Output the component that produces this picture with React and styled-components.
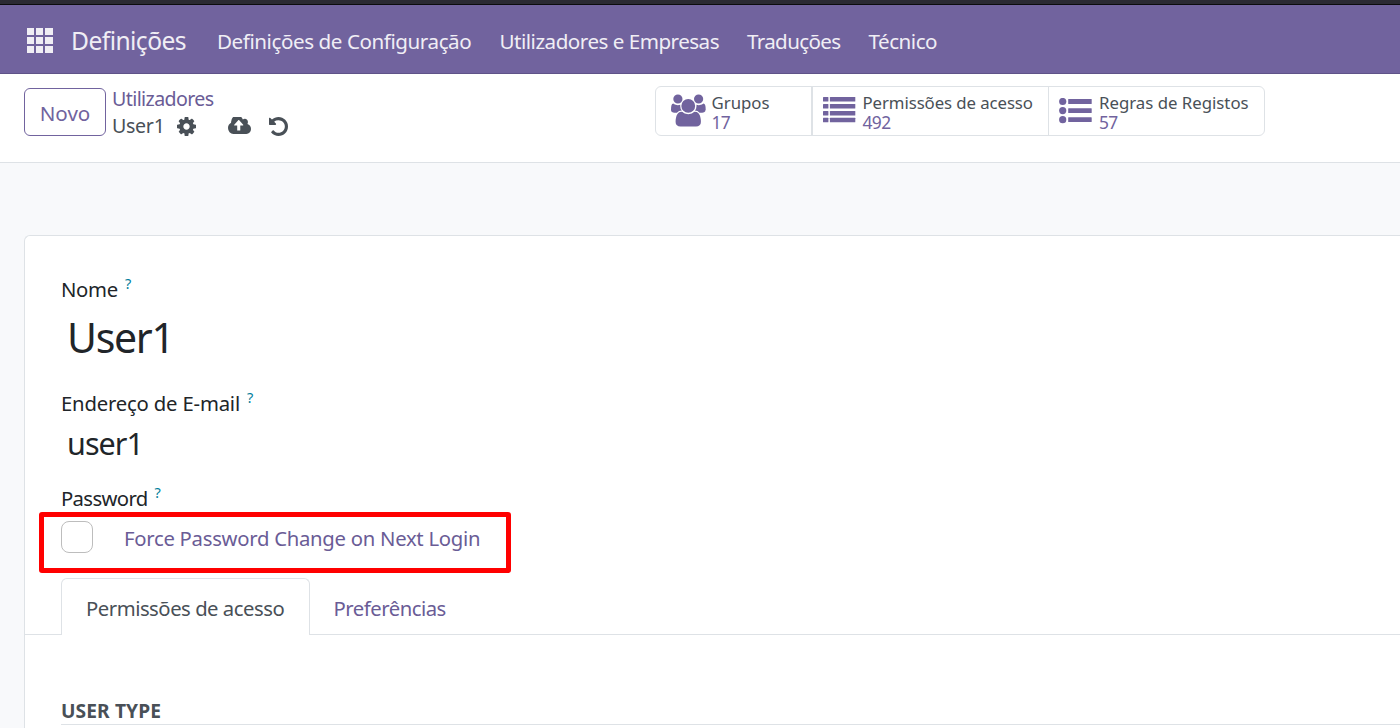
import React from "react";
import styled, { createGlobalStyle } from "styled-components";

const Global = createGlobalStyle`
  * { box-sizing: border-box; }
  html, body { margin: 0; height: 100%; overflow: hidden; }
  body {
    background: #f8f9fa;
    font-family: "Segoe UI", "Noto Sans", "Open Sans", sans-serif;
    font-size: 20.3px;
    color: #212529;
  }
  svg { display: block; fill: currentColor; flex: none; }
`;

const Page = styled.div`
  display: flex;
  flex-direction: column;
  width: 1400px;
  height: 728px;
  overflow: hidden;
  background: #f8f9fb;
`;

const BrowserEdge = styled.div`
  height: 5px;
  flex: none;
  background: #2b2a33;
  border-bottom: 1px solid #0c0c0d;
`;

const Navbar = styled.nav`
  display: flex;
  align-items: center;
  height: 69px;
  flex: none;
  padding: 3px 0 0 27px;
  background: #71639e;
  border-bottom: 1px solid #5f5388;
  color: #f0eef5;
  white-space: nowrap;
  font-size: 20.6px;
`;

const AppsGrid = styled.div`
  display: grid;
  grid-template-columns: 7px 7px 8px;
  grid-auto-rows: 7px;
  gap: 2px;
  margin-right: 18px;
  i { background: #f0eef5; }
`;

const Brand = styled.span`
  width: 146px;
  font-size: 24.6px;
  letter-spacing: -0.55px;
`;

const NavItem = styled.span`
  width: ${(p) => p.$width}px;
  letter-spacing: ${(p) => p.$track}px;
`;

const ControlPanel = styled.header`
  display: flex;
  align-items: flex-start;
  height: 89px;
  flex: none;
  padding: 12px 0 0 24px;
  background: #fff;
  border-bottom: 1px solid #dee2e6;
  white-space: nowrap;
`;

const NewButton = styled.button`
  width: 82px;
  height: 48px;
  margin: 2px 6px 0 0;
  padding: 2px 0 0;
  border: 1px solid #71639e;
  border-radius: 6px;
  background: #fff;
  color: #71639e;
  font: inherit;
  font-size: 20.6px;
`;

const Breadcrumb = styled.div`
  width: 543px;
  margin-top: -1px;
  font-size: 19.6px;
  line-height: 27px;
`;

const Crumb = styled.div`
  color: #6a5c96;
  letter-spacing: -0.6px;
`;

const Current = styled.div`
  display: flex;
  align-items: center;
  color: #495057;
  letter-spacing: -0.3px;
  span { width: 65px; }
`;

const Gear = styled.svg` width: 19px; height: 19px; margin: 1px 32px 0 0; `;
const Cloud = styled.svg` width: 23px; height: 17px; margin-right: 18px; `;
const Undo = styled.svg` width: 19px; height: 19px; margin-top: 1px; `;

const StatBar = styled.div`
  display: flex;
  width: 610px;
  height: 50px;
  border: 1px solid #dee2e6;
  border-radius: 6px;
  font-size: 16.8px;
`;

const Stat = styled.div`
  display: flex;
  align-items: flex-start;
  width: ${(p) => p.$width}px;
  padding-left: ${(p) => p.$left}px;
  border-right: ${(p) => p.$divider || 0}px solid #dee2e6;
  color: #71639e;
`;

const StatIcon = styled.svg`
  margin: ${(p) => p.$top}px ${(p) => p.$gap}px 0 0;
`;

const StatText = styled.div`
  padding-top: 6px;
  line-height: 20px;
`;

const StatLabel = styled.div`
  color: #495057;
  letter-spacing: ${(p) => p.$track || 0}px;
`;

const StatValue = styled.div`
  font-size: 17.4px;
  line-height: 18px;
  letter-spacing: -0.6px;
`;

const Sheet = styled.main`
  flex: 1;
  min-height: 0;
  margin: 72px 0 0 24px;
  padding-top: 38px;
  background: #fff;
  border: 1px solid #dee2e6;
  border-width: 1px 0 0 1px;
  border-top-left-radius: 6px;
  white-space: nowrap;
`;

const Label = styled.div`
  display: flex;
  height: ${(p) => p.$height || 30}px;
  padding-left: 36px;
  line-height: 30px;
  letter-spacing: ${(p) => p.$track || 0}px;
`;

const Help = styled.sup`
  margin-left: 7px;
  font-size: 14.5px;
  line-height: 18px;
  letter-spacing: 0;
  color: #017e9b;
`;

const Value = styled.div`
  height: ${(p) => p.$height}px;
  padding-left: 42px;
  font-size: ${(p) => p.$size}px;
  line-height: ${(p) => p.$line}px;
  letter-spacing: ${(p) => p.$track || 0}px;
`;

const Highlight = styled.div`
  display: flex;
  width: 472px;
  height: 61px;
  margin: 0 0 5px 14px;
  padding: 4px 0 0 17px;
  border: 5px solid #f00;
  border-radius: 3px;
`;

const Checkbox = styled.span`
  width: 32px;
  height: 32px;
  margin-right: 31px;
  border: 1px solid #bdbdbd;
  border-radius: 8px;
`;

const ForceLink = styled.span`
  color: #6a5c96;
  line-height: 35px;
  letter-spacing: -0.27px;
`;

const Tabs = styled.div`
  display: flex;
  height: 57px;
  padding-left: 36px;
  background: linear-gradient(#dee2e6, #dee2e6) bottom / 100% 1px no-repeat;
`;

const Tab = styled.div`
  width: ${(p) => (p.$active ? 249 : 160)}px;
  height: 57px;
  padding-left: ${(p) => (p.$active ? 24 : 23.5)}px;
  line-height: ${(p) => (p.$active ? 59 : 61)}px;
  border: ${(p) => (p.$active ? "1px solid #dee2e6" : "0")};
  border-bottom: 0;
  border-radius: 6px 6px 0 0;
  background: ${(p) => (p.$active ? "#fff" : "transparent")};
  color: ${(p) => (p.$active ? "#495057" : "#6a5c96")};
  letter-spacing: -0.48px;
`;

const Section = styled.h2`
  height: 30px;
  margin: 60px 0 0 36px;
  border-bottom: 1px solid #dee2e6;
  color: #495057;
  font-size: 19.2px;
  font-weight: 700;
  line-height: 31px;
  letter-spacing: 0.1px;
`;

const USERS =
  "M593 896q-162 5-265 128h-134q-82 0-138-40.5t-56-118.5q0-353 124-353 6 0 43.5 21t97.5 42.5 119 21.5q67 0 133-23-5 37-5 66 0 159 93 256zm1071 637q0 120-73 189.5t-194 69.5h-874q-121 0-194-69.5t-73-189.5q0-53 3.5-103.5t14-109 26.5-108.5 43-97.5 62-81 85.5-53.5 111.5-20q10 0 43 21.5t73 48 107 48 135 21.5 135-21.5 107-48 73-48 43-21.5q61 0 111.5 20t85.5 53.5 62 81 43 97.5 26.5 108.5 14 109 3.5 103.5zm-1024-1277q0 106-75 181t-181 75-181-75-75-181 75-181 181-75 181 75 75 181zm704 384q0 159-112.5 271.5t-271.5 112.5-271.5-112.5-112.5-271.5 112.5-271.5 271.5-112.5 271.5 112.5 112.5 271.5zm576 225q0 78-56 118.5t-138 40.5h-134q-103-123-265-128 93-97 93-256 0-29-5-66 66 23 133 23 59 0 119-21.5t97.5-42.5 43.5-21q124 0 124 353zm-128-609q0 106-75 181t-181 75-181-75-75-181 75-181 181-75 181 75 75 181z";
const COG =
  "M1152 896q0-106-75-181t-181-75-181 75-75 181 75 181 181 75 181-75 75-181zm512-109v222q0 12-8 23t-20 13l-185 28q-19 54-39 91 35 50 107 138 10 12 10 25t-9 23q-27 37-99 108t-94 71q-12 0-26-9l-138-108q-44 23-91 38-16 136-29 186-7 28-36 28h-222q-14 0-24.5-8.5t-11.5-21.5l-28-184q-49-16-90-37l-141 107q-10 9-25 9-14 0-25-11-126-114-165-168-7-10-7-23 0-12 8-23 15-21 51-66.5t54-70.5q-27-50-41-99l-183-27q-13-2-21-12.5t-8-23.5v-222q0-12 8-23t19-13l186-28q14-46 39-92-40-57-107-138-10-12-10-24 0-10 9-23 26-36 98.5-107.5t94.5-71.5q13 0 26 10l138 107q44-23 91-38 16-136 29-186 7-28 36-28h222q14 0 24.5 8.5t11.5 21.5l28 184q49 16 90 37l142-107q9-9 24-9 13 0 25 10 129 119 165 170 7 8 7 22 0 12-8 23-15 21-51 66.5t-54 70.5q26 50 41 98l183 28q13 2 21 12.5t8 23.5z";
const UNDO =
  "M1664 896q0 156-61 298t-164 245-245 164-298 61q-172 0-327-72.5t-264-204.5q-7-10-6.5-22.5t8.5-20.5l137-138q10-9 25-9 16 2 23 12 73 95 179 147t225 52q104 0 198.5-40.5t163.5-109.5 109.5-163.5 40.5-198.5-40.5-198.5-109.5-163.5-163.5-109.5-198.5-40.5q-98 0-188 35.5t-160 101.5l137 138q31 30 14 69-17 40-59 40h-448q-26 0-45-19t-19-45v-448q0-42 40-59 39-17 69 14l130 129q107-101 244.5-156.5t284.5-55.5q156 0 298 61t245 164 164 245 61 298z";
const CLOUD =
  "M1216 864q0-14-9-23l-352-352q-9-9-23-9t-23 9l-351 351q-10 12-10 24 0 14 9 23t23 9h224v352q0 13 9.5 22.5t22.5 9.5h192q13 0 22.5-9.5t9.5-22.5v-352h224q13 0 22.5-9.5t9.5-22.5zm640 288q0 159-112.5 271.5t-271.5 112.5h-1088q-185 0-316.5-131.5t-131.5-316.5q0-130 70-240t188-165q-2-30-2-43 0-212 150-362t362-150q156 0 285.5 87t188.5 231q71-62 166-62 106 0 181 75t75 181q0 76-41 138 130 31 213.5 135.5t83.5 238.5z";

const rows4 = [0, 7, 14, 20.7];
const rows3 = [3.5, 12.6, 21.7];

export default function App() {
  return (
    <Page>
      <Global />
      <BrowserEdge />
      <Navbar>
        <AppsGrid>
          {Array.from({ length: 9 }, (_, i) => <i key={i} />)}
        </AppsGrid>
        <Brand>Definições</Brand>
        <NavItem $width={282.5} $track={-0.43}>Definições de Configuração</NavItem>
        <NavItem $width={247.5} $track={-0.5}>Utilizadores e Empresas</NavItem>
        <NavItem $width={121.5} $track={-0.65}>Traduções</NavItem>
        <NavItem $width={90} $track={-0.47}>Técnico</NavItem>
      </Navbar>
      <ControlPanel>
        <NewButton>Novo</NewButton>
        <Breadcrumb>
          <Crumb>Utilizadores</Crumb>
          <Current>
            <span>User1</span>
            <Gear viewBox="128 128 1536 1536"><path d={COG} /></Gear>
            <Cloud viewBox="-64 256 1920 1280" preserveAspectRatio="none"><path d={CLOUD} /></Cloud>
            <Undo viewBox="128 128 1536 1536"><path d={UNDO} /></Undo>
          </Current>
        </Breadcrumb>
        <StatBar>
          <Stat $width={157} $left={15} $divider={2}>
            <StatIcon $top={7} $gap={6} width="34.5" height="33" viewBox="0 0 1920 1792"><path d={USERS} /></StatIcon>
            <StatText>
              <StatLabel>Grupos</StatLabel>
              <StatValue>17</StatValue>
            </StatText>
          </Stat>
          <Stat $width={236} $left={10} $divider={1}>
            <StatIcon $top={10} $gap={6.5} width="33" height="26" viewBox="0 0 33 26">
              {rows4.map((y) => (
                <g key={y}>
                  <rect x="0" y={y} width="5.4" height="4.5" rx="0.5" />
                  <rect x="6.9" y={y} width="25.4" height="4.5" rx="0.5" />
                </g>
              ))}
            </StatIcon>
            <StatText>
              <StatLabel $track={-0.08}>Permissões de acesso</StatLabel>
              <StatValue>492</StatValue>
            </StatText>
          </Stat>
          <Stat $width={215} $left={10}>
            <StatIcon $top={11} $gap={7} width="33" height="26" viewBox="0 0 33 26">
              {rows3.map((y) => (
                <g key={y}>
                  <circle cx="3.7" cy={y} r="3.6" />
                  <rect x="9.2" y={y - 2.4} width="23.5" height="4.8" rx="0.5" />
                </g>
              ))}
            </StatIcon>
            <StatText>
              <StatLabel>Regras de Registos</StatLabel>
              <StatValue>57</StatValue>
            </StatText>
          </Stat>
        </StatBar>
      </ControlPanel>
      <Sheet>
        <Label $track={-0.3}>Nome<Help>?</Help></Label>
        <Value $height={84} $size={41} $line={66} $track={-1.3}>User1</Value>
        <Label $track={-0.18}>Endereço de E-mail<Help>?</Help></Label>
        <Value $height={65} $size={30.5} $line={51} $track={-0.95}>user1</Value>
        <Label $height={29} $track={-0.65}>Password<Help>?</Help></Label>
        <Highlight>
          <Checkbox role="checkbox" aria-checked="false" />
          <ForceLink>Force Password Change on Next Login</ForceLink>
        </Highlight>
        <Tabs>
          <Tab $active>Permissões de acesso</Tab>
          <Tab>Preferências</Tab>
        </Tabs>
        <Section>USER TYPE</Section>
      </Sheet>
    </Page>
  );
}
